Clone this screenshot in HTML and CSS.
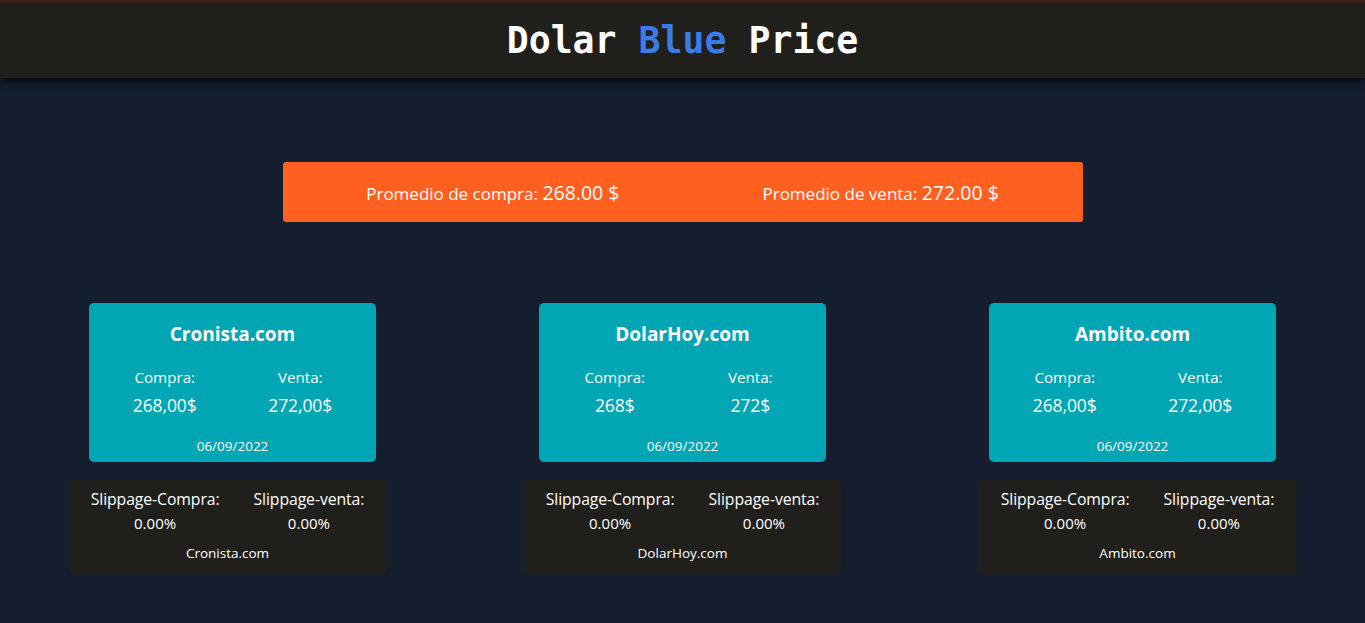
FILE: index.html
```html
<!DOCTYPE html>
<html lang="es">
<head>
<meta charset="utf-8">
<title>Dolar Blue Price</title>
<link rel="stylesheet" href="styles.css">
</head>
<body>
<header class="topbar">
  <h1 class="title">Dolar <span class="blue">Blue</span> Price</h1>
</header>
<main class="content">
  <section class="average">
    <p class="avg-item">Promedio de compra: <span class="avg-num">268.00 $</span></p>
    <p class="avg-item">Promedio de venta: <span class="avg-num">272.00 $</span></p>
  </section>
  <section class="cards-row">
    <div class="card">
      <h2 class="card-title">Cronista.com</h2>
      <div class="pair">
        <div class="col"><span class="lbl">Compra:</span><span class="val">268,00$</span></div>
        <div class="col"><span class="lbl">Venta:</span><span class="val">272,00$</span></div>
      </div>
      <p class="date">06/09/2022</p>
    </div>
    <div class="card">
      <h2 class="card-title">DolarHoy.com</h2>
      <div class="pair">
        <div class="col"><span class="lbl">Compra:</span><span class="val">268$</span></div>
        <div class="col"><span class="lbl">Venta:</span><span class="val">272$</span></div>
      </div>
      <p class="date">06/09/2022</p>
    </div>
    <div class="card">
      <h2 class="card-title">Ambito.com</h2>
      <div class="pair">
        <div class="col"><span class="lbl">Compra:</span><span class="val">268,00$</span></div>
        <div class="col"><span class="lbl">Venta:</span><span class="val">272,00$</span></div>
      </div>
      <p class="date">06/09/2022</p>
    </div>
  </section>
  <section class="slips-row">
    <div class="slip">
      <div class="slip-pair">
        <div class="col"><span class="slbl">Slippage-Compra:</span><span class="sval">0.00%</span></div>
        <div class="col"><span class="slbl">Slippage-venta:</span><span class="sval">0.00%</span></div>
      </div>
      <p class="slip-src">Cronista.com</p>
    </div>
    <div class="slip">
      <div class="slip-pair">
        <div class="col"><span class="slbl">Slippage-Compra:</span><span class="sval">0.00%</span></div>
        <div class="col"><span class="slbl">Slippage-venta:</span><span class="sval">0.00%</span></div>
      </div>
      <p class="slip-src">DolarHoy.com</p>
    </div>
    <div class="slip">
      <div class="slip-pair">
        <div class="col"><span class="slbl">Slippage-Compra:</span><span class="sval">0.00%</span></div>
        <div class="col"><span class="slbl">Slippage-venta:</span><span class="sval">0.00%</span></div>
      </div>
      <p class="slip-src">Ambito.com</p>
    </div>
  </section>
</main>
</body>
</html>
```

FILE: styles.css
```css
* { box-sizing: border-box; }
html, body { margin: 0; padding: 0; }
body {
  background: #141e2f;
  color: #ffffff;
  font-family: "Segoe UI", "Open Sans", "Noto Sans", sans-serif;
  height: 623px;
  overflow: hidden;
}
.topbar {
  height: 78px;
  background: #201f1c;
  border-top: 2px solid #4a1a16;
  box-shadow: 0 3px 8px rgba(0, 0, 0, 0.75);
  display: flex;
  align-items: center;
  justify-content: center;
  position: relative;
  z-index: 1;
}
.title {
  margin: 0;
  font-family: "DejaVu Sans Mono", monospace;
  font-weight: bold;
  font-size: 36.5px;
  color: #ffffff;
  line-height: 1;
  padding-top: 2px;
}
.blue { color: #3b7be8; }
.content {
  padding-top: 84px;
}
.average {
  width: 800px;
  height: 60px;
  margin: 0 auto;
  background: #ff5f1f;
  border-radius: 3px;
  display: flex;
  align-items: center;
  justify-content: center;
  gap: 143px;
}
.avg-item {
  margin: 0;
  font-size: 17px;
  letter-spacing: 0;
}
.avg-num { font-size: 19.5px; }
.cards-row {
  width: 1350px;
  margin: 81px auto 0;
  display: grid;
  grid-template-columns: repeat(3, 1fr);
  justify-items: center;
}
.slips-row {
  width: 1365px;
  margin: 18px auto 0;
  display: grid;
  grid-template-columns: repeat(3, 1fr);
  justify-items: center;
}
.card {
  width: 287px;
  height: 159px;
  background: #00a6b4;
  border-radius: 5px;
  padding: 18px 8px 0;
  display: flex;
  flex-direction: column;
  align-items: center;
}
.card-title {
  margin: 0;
  font-size: 19px;
  font-weight: bold;
  line-height: 26px;
}
.pair {
  display: grid;
  grid-template-columns: 1fr 1fr;
  width: 100%;
  margin-top: 20px;
}
.col {
  display: flex;
  flex-direction: column;
  align-items: center;
}
.lbl { font-size: 15.2px; line-height: 20px; }
.val { font-size: 17.5px; line-height: 24px; margin-top: 6px; letter-spacing: -0.1px; }
.date {
  margin: 20px 0 0;
  font-size: 13.5px;
  line-height: 18px;
}
.slip {
  width: 318px;
  height: 94px;
  background: #201f1c;
  border-radius: 4px;
  padding: 9px 0 0;
  display: flex;
  flex-direction: column;
  align-items: center;
}
.slip-pair {
  display: flex;
  justify-content: center;
  gap: 34px;
}
.slbl { font-size: 15.8px; line-height: 21px; letter-spacing: -0.1px; }
.sval { font-size: 15px; line-height: 21px; margin-top: 3px; }
.slip-src {
  margin: 10px 0 0;
  font-size: 13.5px;
  line-height: 18px;
}
```
